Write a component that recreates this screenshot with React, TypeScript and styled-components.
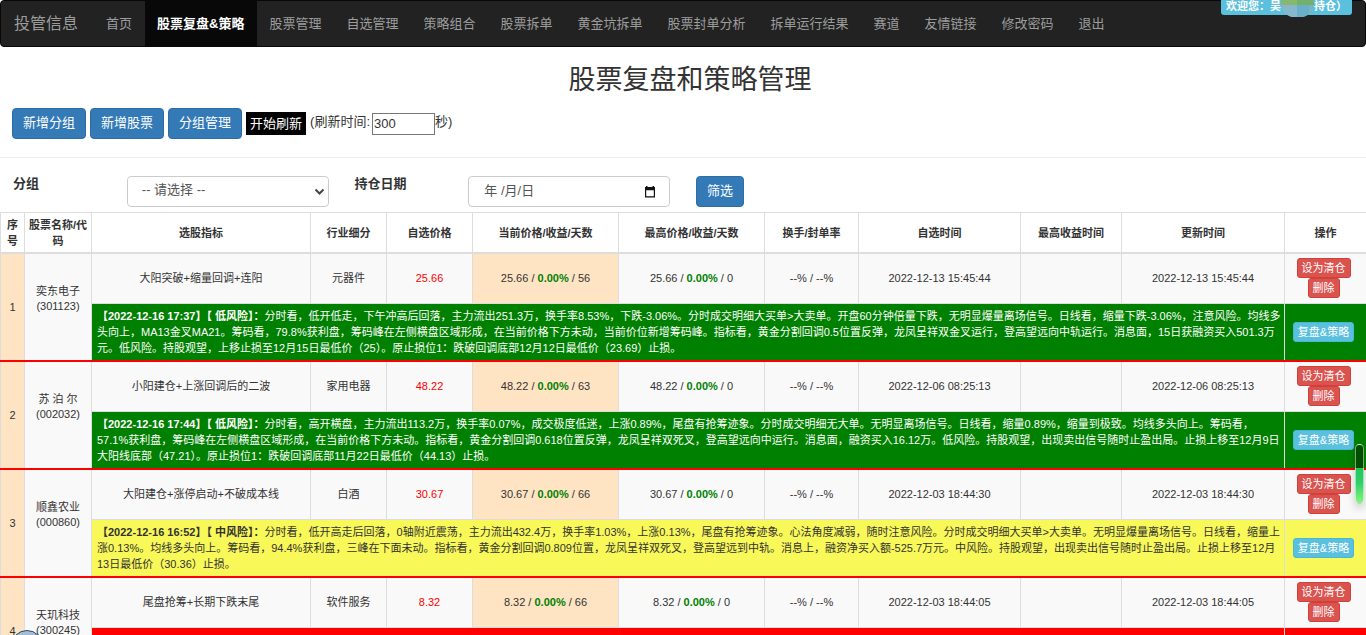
import React from 'react';
import styled, { createGlobalStyle, css } from 'styled-components';

const GlobalStyle = createGlobalStyle`
  *, *::before, *::after { box-sizing: border-box; }
  html, body { margin: 0; background: #fff; }
  body, button, input, select {
    font-family: "Liberation Sans", "Noto Sans CJK SC", sans-serif;
  }
  body { font-size: 13px; line-height: 18px; color: #333; }
`;

const Page = styled.div`
  height: 100vh;
  overflow: hidden;
  position: relative;
`;

const Navbar = styled.nav`
  display: flex;
  align-items: stretch;
  min-height: 47px;
  background: #222;
  border: 1px solid #080808;
  border-radius: 4px;
`;

const Brand = styled.a`
  display: flex;
  align-items: center;
  padding: 0 16px 0 13px;
  font-size: 16px;
  color: #9d9d9d;
  text-decoration: none;
`;

const NavList = styled.ul`
  display: flex;
  margin: 0;
  padding: 0;
  list-style: none;
`;

const NavLink = styled.a<{ $active?: boolean }>`
  display: flex;
  align-items: center;
  height: 100%;
  padding: 0 13px 0 12px;
  white-space: nowrap;
  text-decoration: none;
  color: ${p => (p.$active ? '#fff' : '#9d9d9d')};
  font-weight: ${p => (p.$active ? 700 : 400)};
  background: ${p => (p.$active ? '#080808' : 'transparent')};
`;

const Welcome = styled.div`
  position: absolute;
  top: 0;
  right: 14px;
  display: flex;
  height: 15px;
  padding: 0 5px;
  border-radius: 0 0 3px 3px;
  background: #5bc0de;
  color: #fff;
  font-size: 11px;
  font-weight: 700;
  line-height: 13px;
  white-space: nowrap;
`;

const Mosaic = styled.svg`
  display: block;
  flex: none;
`;

const Title = styled.h2`
  margin: 18px 0 0 14px;
  font-size: 27px;
  line-height: 30px;
  font-weight: 400;
  text-align: center;
`;

const Toolbar = styled.div`
  display: flex;
  align-items: center;
  gap: 4px;
  margin-top: 13px;
  padding: 0 12px;
`;

const Button = styled.button`
  height: 31px;
  padding: 0 10px 4px;
  border: 1px solid #2e6da4;
  border-radius: 4px;
  background: #337ab7;
  color: #fff;
  font-size: 13px;
`;

const RefreshButton = styled.button`
  height: 23px;
  padding: 0 4px 3px;
  border: 0;
  background: #000;
  color: #fff;
  font-size: 13px;
`;

const IntervalField = styled.label`
  display: flex;
  align-items: flex-start;
  line-height: 20px;
`;

const IntervalInput = styled.input`
  width: 63px;
  height: 22px;
  margin: 1px 0 0 2px;
  padding: 0 1px 2px;
  border: 1px solid #767676;
  font-size: 13px;
  color: #333;
`;

const Divider = styled.hr`
  margin: 18px 0;
  border: 0;
  border-top: 1px solid #eee;
`;

const Filters = styled.form`
  display: grid;
  grid-template-columns:
    minmax(0, 1fr) minmax(0, 2fr) minmax(0, 1fr) minmax(0, 2fr) minmax(0, 6fr);
  margin-bottom: 5px;
`;

const FilterCell = styled.div`
  padding: 0 13px;
`;

const FilterLabel = styled.label`
  display: block;
  font-size: 13px;
  line-height: 16px;
  font-weight: 700;
`;

const controlBox = css`
  width: 100%;
  height: 31px;
  border: 1px solid #ccc;
  border-radius: 4px;
  background: #fff;
  color: #555;
  font-size: 13px;
`;

const SelectWrap = styled.div`
  position: relative;
  svg { position: absolute; right: 4px; top: 12px; pointer-events: none; }
`;

const Select = styled.select`
  ${controlBox}
  appearance: none;
  padding: 0 14px 4px;
`;

const DateField = styled.div`
  ${controlBox}
  display: flex;
  align-items: center;
  padding: 0 13px 0 15px;
`;

const DateInput = styled.input`
  flex: 1;
  min-width: 0;
  padding: 0 0 4px;
  border: 0;
  outline: 0;
  background: none;
  color: #555;
  font-size: 13px;
`;

const IconButton = styled.button`
  display: flex;
  padding: 0;
  border: 0;
  background: none;
`;

const StockTable = styled.table`
  width: 100%;
  table-layout: fixed;
  border-collapse: collapse;
  font-size: 11px;
  line-height: 16px;
  text-align: center;
`;

const HeadCell = styled.th`
  height: 40px;
  padding: 4px 2px 2px;
  border: 1px solid #ddd;
  border-bottom: 2px solid #ddd;
  font-weight: 700;
`;

const Cell = styled.td<{ $tint?: boolean }>`
  height: 51px;
  padding: 4px;
  border: 1px solid #ddd;
  background: ${p => (p.$tint ? '#ffe4c4' : '#f9f9f9')};
`;

const SpanCell = styled(Cell)`
  border-bottom: 2px solid #f00;
`;

const NameCell = styled(SpanCell)`
  padding-bottom: 20px;
  line-height: 15px;
`;

type Tone = 'low' | 'mid' | 'high';

const tones: Record<Tone, { bg: string; fg: string }> = {
  low: { bg: '#008000', fg: '#fff' },
  mid: { bg: '#f8f859', fg: '#333' },
  high: { bg: '#ff0000', fg: '#fff' },
};

const ReviewCell = styled.td<{ $tone: Tone }>`
  height: 57px;
  padding: 3px 4px;
  border: 1px solid #ddd;
  border-bottom: 2px solid #f00;
  background: ${p => tones[p.$tone].bg};
  color: ${p => tones[p.$tone].fg};
`;

const ReviewText = styled(ReviewCell)`
  padding: 3px 1px 3px 5px;
  text-align: left;
`;

const Price = styled.span`
  color: #f00;
`;

const Gain = styled.b`
  color: #008000;
`;

const Actions = styled.div`
  display: flex;
  flex-direction: column;
  align-items: center;
  padding-right: 4px;
`;

const SmallButton = styled.button<{ $kind: 'danger' | 'info' }>`
  height: 20px;
  padding: 0 4px;
  border: 1px solid ${p => (p.$kind === 'danger' ? '#d43f3a' : '#46b8da')};
  border-radius: 3px;
  background: ${p => (p.$kind === 'danger' ? '#d9534f' : '#5bc0de')};
  color: #fff;
  font-size: 11px;
  line-height: 16px;
  white-space: nowrap;
`;

const ScrollCapsule = styled.div`
  position: absolute;
  right: 2px;
  top: 444px;
  width: 9px;
  height: 60px;
  border: 1px solid rgba(255, 255, 255, 0.5);
  border-radius: 5px;
  background: linear-gradient(rgba(0, 0, 0, 0.4) 40%, #22c55e 40%, #2fcf6b 65%, #86f57e);
  box-shadow: 0 4px 8px rgba(0, 0, 0, 0.2);
`;

const Orb = styled.div`
  position: absolute;
  left: 11px;
  bottom: -27px;
  width: 32px;
  height: 32px;
  border: 1px solid #1f4a6b;
  border-radius: 50%;
  background: linear-gradient(#a9c0d6, #6d94b8);
`;

const navItems = [
  '首页', '股票复盘&策略', '股票管理', '自选管理', '策略组合', '股票拆单', '黄金坑拆单',
  '股票封单分析', '拆单运行结果', '赛道', '友情链接', '修改密码', '退出',
];

const columns: [string, number][] = [
  ['序号', 24], ['股票名称/代码', 67], ['选股指标', 219], ['行业细分', 76], ['自选价格', 86],
  ['当前价格/收益/天数', 146], ['最高价格/收益/天数', 146], ['换手/封单率', 94],
  ['自选时间', 162], ['最高收益时间', 101], ['更新时间', 163], ['操作', 82],
];

interface Stock {
  name: string;
  code: string;
  signal: string;
  industry: string;
  price: string;
  days: number;
  time: string;
  tone: Tone;
  stamp?: string;
  review?: string;
}

const stocks: Stock[] = [
  {
    name: '奕东电子', code: '301123', signal: '大阳突破+缩量回调+连阳', industry: '元器件',
    price: '25.66', days: 56, time: '2022-12-13 15:45:44', tone: 'low',
    stamp: '【2022-12-16 17:37】【 低风险】：',
    review: '分时看，低开低走，下午冲高后回落，主力流出251.3万，换手率8.53%，下跌-3.06%。分时成交明细大买单>大卖单。开盘60分钟倍量下跌，无明显爆量离场信号。日线看，缩量下跌-3.06%，注意风险。均线多头向上，MA13金叉MA21。筹码看，79.8%获利盘，筹码峰在左侧横盘区域形成，在当前价格下方未动，当前价位新增筹码峰。指标看，黄金分割回调0.5位置反弹，龙凤呈祥双金叉运行，登高望远向中轨运行。消息面，15日获融资买入501.3万元。低风险。持股观望，上移止损至12月15日最低价（25）。原止损位1：跌破回调底部12月12日最低价（23.69）止损。',
  },
  {
    name: '苏 泊 尔', code: '002032', signal: '小阳建仓+上涨回调后的二波', industry: '家用电器',
    price: '48.22', days: 63, time: '2022-12-06 08:25:13', tone: 'low',
    stamp: '【2022-12-16 17:44】【 低风险】：',
    review: '分时看，高开横盘，主力流出113.2万，换手率0.07%，成交极度低迷，上涨0.89%，尾盘有抢筹迹象。分时成交明细无大单。无明显离场信号。日线看，缩量0.89%，缩量到极致。均线多头向上。筹码看，57.1%获利盘，筹码峰在左侧横盘区域形成，在当前价格下方未动。指标看，黄金分割回调0.618位置反弹，龙凤呈祥双死叉，登高望远向中运行。消息面，融资买入16.12万。低风险。持股观望，出现卖出信号随时止盈出局。止损上移至12月9日大阳线底部（47.21）。原止损位1：跌破回调底部11月22日最低价（44.13）止损。',
  },
  {
    name: '顺鑫农业', code: '000860', signal: '大阳建仓+涨停启动+不破成本线', industry: '白酒',
    price: '30.67', days: 66, time: '2022-12-03 18:44:30', tone: 'mid',
    stamp: '【2022-12-16 16:52】【 中风险】：',
    review: '分时看，低开高走后回落，0轴附近震荡，主力流出432.4万，换手率1.03%，上涨0.13%，尾盘有抢筹迹象。心法角度减弱，随时注意风险。分时成交明细大买单>大卖单。无明显爆量离场信号。日线看，缩量上涨0.13%。均线多头向上。筹码看，94.4%获利盘，三峰在下面未动。指标看，黄金分割回调0.809位置，龙凤呈祥双死叉，登高望远到中轨。消息上，融资净买入额-525.7万元。中风险。持股观望，出现卖出信号随时止盈出局。止损上移至12月13日最低价（30.36）止损。',
  },
  {
    name: '天玑科技', code: '300245', signal: '尾盘抢筹+长期下跌末尾', industry: '软件服务',
    price: '8.32', days: 66, time: '2022-12-03 18:44:05', tone: 'high',
  },
];

function StockRows({ stock, index }: { stock: Stock; index: number }) {
  return (
    <>
      <tr>
        <SpanCell rowSpan={2} $tint>{index}</SpanCell>
        <NameCell rowSpan={2}>{stock.name}<br />({stock.code})</NameCell>
        <Cell>{stock.signal}</Cell>
        <Cell>{stock.industry}</Cell>
        <Cell><Price>{stock.price}</Price></Cell>
        <Cell $tint>{stock.price} / <Gain>0.00%</Gain> / {stock.days}</Cell>
        <Cell>{stock.price} / <Gain>0.00%</Gain> / 0</Cell>
        <Cell>--% / --%</Cell>
        <Cell>{stock.time}</Cell>
        <Cell />
        <Cell>{stock.time}</Cell>
        <Cell>
          <Actions>
            <SmallButton type="button" $kind="danger">设为清仓</SmallButton>
            <SmallButton type="button" $kind="danger">删除</SmallButton>
          </Actions>
        </Cell>
      </tr>
      <tr>
        <ReviewText colSpan={9} $tone={stock.tone}>
          {stock.stamp && <b>{stock.stamp}</b>}
          {stock.review}
        </ReviewText>
        <ReviewCell $tone={stock.tone}>
          {stock.review && (
            <Actions>
              <SmallButton type="button" $kind="info">复盘&amp;策略</SmallButton>
            </Actions>
          )}
        </ReviewCell>
      </tr>
    </>
  );
}

export default function App() {
  return (
    <Page>
      <GlobalStyle />
      <Navbar>
        <Brand href="#">投管信息</Brand>
        <NavList>
          {navItems.map((item, i) => (
            <li key={item}><NavLink href="#" $active={i === 1}>{item}</NavLink></li>
          ))}
        </NavList>
      </Navbar>
      <Welcome>
        <span>欢迎您：吴</span>
        <Mosaic width="33" height="17" viewBox="0 0 33 17" aria-hidden="true">
          <clipPath id="lens"><ellipse cx="16.5" cy="4" rx="16.5" ry="14" /></clipPath>
          <g clipPath="url(#lens)">
            <rect width="16" height="5" fill="#86b96b" />
            <rect x="16" width="17" height="5" fill="#72b06b" />
            <rect y="5" width="16" height="12" fill="#85b8cd" />
            <rect x="16" y="5" width="12" height="12" fill="#69afc9" />
            <rect x="28" y="5" width="5" height="12" fill="#78b4c8" />
          </g>
        </Mosaic>
        <span>持仓）</span>
      </Welcome>

      <Title>股票复盘和策略管理</Title>

      <Toolbar>
        <Button type="button">新增分组</Button>
        <Button type="button">新增股票</Button>
        <Button type="button">分组管理</Button>
        <RefreshButton type="button">开始刷新</RefreshButton>
        <IntervalField>
          (刷新时间:
          <IntervalInput type="text" defaultValue="300" />
          秒)
        </IntervalField>
      </Toolbar>

      <Divider />

      <Filters>
        <FilterCell><FilterLabel htmlFor="group">分组</FilterLabel></FilterCell>
        <FilterCell>
          <SelectWrap>
            <Select id="group"><option>-- 请选择 --</option></Select>
            <svg width="11" height="8" viewBox="0 0 11 8" aria-hidden="true">
              <path d="M1.5 1.5l4 4 4-4" fill="none" stroke="#444" strokeWidth="2" />
            </svg>
          </SelectWrap>
        </FilterCell>
        <FilterCell><FilterLabel htmlFor="date">持仓日期</FilterLabel></FilterCell>
        <FilterCell>
          <DateField>
            <DateInput id="date" type="text" defaultValue="年 /月/日" />
            <IconButton type="button" aria-label="选择日期">
              <svg width="12" height="12" viewBox="0 0 12 12" aria-hidden="true">
                <path d="M1 1h10v10.5H1zM2.2 4.2v6.1h7.6V4.2z" fill="#111" fillRule="evenodd" />
                <path d="M2 0h1.5v1H2zM8.5 0H10v1H8.5z" fill="#111" />
              </svg>
            </IconButton>
          </DateField>
        </FilterCell>
        <FilterCell><Button type="button">筛选</Button></FilterCell>
      </Filters>

      <StockTable>
        <colgroup>
          {columns.map(([label, width]) => <col key={label} style={{ width }} />)}
        </colgroup>
        <thead>
          <tr>{columns.map(([label]) => <HeadCell key={label}>{label}</HeadCell>)}</tr>
        </thead>
        <tbody>
          {stocks.map((stock, i) => <StockRows key={stock.code} stock={stock} index={i + 1} />)}
        </tbody>
      </StockTable>

      <ScrollCapsule />
      <Orb />
    </Page>
  );
}
